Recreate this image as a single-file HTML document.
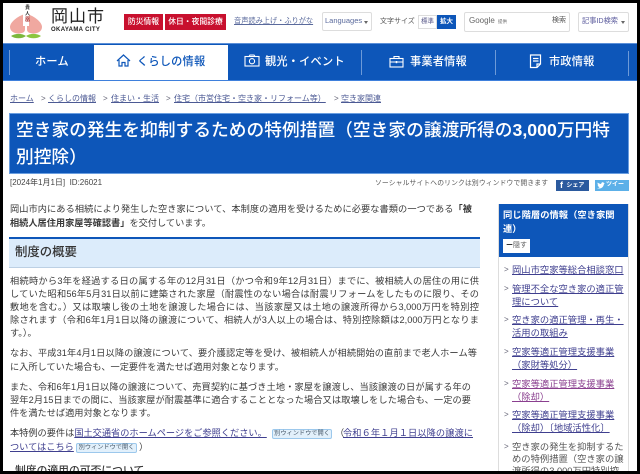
<!DOCTYPE html>
<html lang="ja"><head><meta charset="utf-8"><title>空き家の発生を抑制するための特例措置</title>
<style>
html,body{margin:0;padding:0;background:#000;}
#f{position:absolute;left:0;top:0;width:640px;height:474px;overflow:hidden;background:#000;}
#p{position:absolute;left:3px;top:3px;width:634px;height:468px;overflow:hidden;background:#fff;}
#c{position:absolute;left:-3px;top:-3px;width:640px;height:474px;font-family:"Liberation Sans","Noto Sans CJK JP",sans-serif;color:#3a3a3a;filter:blur(.35px);}
.l{position:absolute;white-space:nowrap;line-height:14px;font-size:9.2px;}
.j{text-align-last:justify;}
.b{position:absolute;box-sizing:border-box;}
.a{color:#3f3f8f;text-decoration:underline;}
.bc{font-size:8px;color:#4c5a94;text-decoration:underline;}
.ar{font-size:8px;color:#667;}
.s{font-size:9.3px;color:#3f3f8f;text-decoration:underline;}
.nav{color:#fff;font-size:11.2px;font-weight:500;letter-spacing:.2px;}
.w{position:absolute;box-sizing:border-box;font-size:6.2px;line-height:8px;height:10px;border:1px solid #9cc8ec;background:#e2f0fb;color:#456;border-radius:2px;text-align:center;}
strong{font-weight:700;}
</style></head><body><div id="f"><div id="p"><div id="c">

<!-- logo -->
<svg class="b" style="left:8px;top:3px" width="36" height="37" viewBox="0 0 36 37">
<path d="M17 11C10 13 2 19 2 24c0 4 4 6.500 8 6.500 4 0 7-1 7-4z" fill="#f0a8a0"/>
<path d="M19 11c7 2 15 8 15 13 0 4-4 6.500-8 6.500-4 0-7-1-7-4z" fill="#f0a8a0"/>
<path d="M3 33c5-3 11-2.500 15 0-4 3-11 3-15 0z" fill="#7cb83e"/>
<path d="M33 33c-5-3-11-2.500-15 0 4 3 11 3 15 0z" fill="#8cc63f"/>
<rect x="15" y="2" width="6" height="21" fill="#fff"/>
</svg>
<div class="l" style="left:25px;top:5px;font-size:5px;line-height:6px;width:6px;white-space:normal;font-weight:700;color:#333">貴人</div>
<div class="l" style="left:25px;top:17px;font-size:5px;line-height:6px;color:#a33;font-weight:700">凰</div>
<div class="l" style="left:51px;top:7px;font-size:17px;line-height:20px;letter-spacing:1px;color:#222;">岡山市</div>
<div class="l" style="left:51px;top:26px;font-size:6px;line-height:8px;font-weight:700;letter-spacing:.35px;color:#222">OKAYAMA CITY</div>

<!-- top bar -->
<div class="b" style="left:124px;top:14px;width:39px;height:16px;background:#c8102e;color:#fff;font-size:7.800px;line-height:16px;text-align:center;font-weight:500">防災情報</div>
<div class="b" style="left:165px;top:14px;width:61px;height:16px;background:#c8102e;color:#fff;font-size:7.800px;line-height:16px;text-align:center;font-weight:500">休日・夜間診療</div>
<div class="l" style="left:234px;top:14px;font-size:7.200px;color:#5a6a9c;text-decoration:underline">音声読み上げ・ふりがな</div>

<div class="b" style="left:322px;top:12px;width:50px;height:19px;border:1px solid #ddd;border-radius:2px"></div>
<div class="l" style="left:325px;top:14px;font-size:7.500px;color:#5a6a9c">Languages</div>
<div class="b" style="left:364px;top:21px;border:2.500px solid transparent;border-top:3px solid #666"></div>
<div class="l" style="left:380px;top:15px;font-size:7px;color:#555">文字サイズ</div>
<div class="b" style="left:418px;top:15px;width:19px;height:14px;border:1px solid #ddd;font-size:6.500px;line-height:12px;text-align:center;color:#5a5a8a">標準</div>
<div class="b" style="left:437px;top:15px;width:19px;height:14px;background:#0d56b9;font-size:6.500px;line-height:14px;text-align:center;color:#fff;font-weight:700">拡大</div>
<div class="b" style="left:464px;top:12px;width:106px;height:20px;border:1px solid #ddd;border-radius:2px"></div>
<div class="l" style="left:469px;top:14px;font-size:8px;color:#666">Google</div>
<div class="l" style="left:498px;top:15px;font-size:4.500px;color:#666">提供</div>
<div class="l" style="left:552px;top:14px;font-size:7px;color:#555">検索</div>
<div class="b" style="left:578px;top:12px;width:51px;height:20px;border:1px solid #ddd;border-radius:2px"></div>
<div class="l" style="left:582px;top:14px;font-size:7.200px;color:#5a5a9c">記事ID検索</div>
<div class="b" style="left:621px;top:21px;border:2.500px solid transparent;border-top:3px solid #666"></div>

<!-- nav -->
<div class="b" style="left:3px;top:43px;width:634px;height:38px;background:#0d56b9;border-top:1px solid #5b8fd8;border-bottom:1px solid #3f80dc"></div>
<div class="b" style="left:94px;top:45px;width:134px;height:35px;background:#fff"></div>
<div class="b" style="left:9px;top:50px;width:1px;height:25px;background:#6d9ad8"></div>
<div class="b" style="left:361px;top:50px;width:1px;height:25px;background:#6d9ad8"></div>
<div class="b" style="left:495px;top:50px;width:1px;height:25px;background:#6d9ad8"></div>
<div class="b" style="left:628px;top:51px;width:1px;height:25px;background:#6d9ad8"></div>
<div class="l nav" style="left:35px;top:55px">ホーム</div>
<svg class="b" style="left:116px;top:54px" width="15" height="13" viewBox="0 0 15 13" fill="none" stroke="#0d56b9" stroke-width="1.200"><path d="M1 7 7.500 1 14 7M3 6v6h3V8.500h3V12h3V6"/></svg>
<div class="l nav" style="left:137px;top:55px;color:#0d56b9">くらしの情報</div>
<svg class="b" style="left:244px;top:54px" width="16" height="13" viewBox="0 0 16 13" fill="none" stroke="#fff" stroke-width="1.100"><rect x="1" y="2.500" width="14" height="9.500"/><path d="M5 2.500 6 1h4l1 1.500"/><circle cx="8" cy="7.200" r="2.600"/></svg>
<div class="l nav" style="left:265px;top:55px">観光・イベント</div>
<svg class="b" style="left:389px;top:55px" width="15" height="13" viewBox="0 0 15 13" fill="none" stroke="#fff" stroke-width="1.100"><rect x="1" y="3.500" width="13" height="8.500"/><path d="M5 3.500V1.500h5v2M1 7h13"/><path d="M7.500 6v2.200" stroke-width="1.500"/></svg>
<div class="l nav" style="left:410px;top:55px">事業者情報</div>
<svg class="b" style="left:529px;top:54px" width="13" height="15" viewBox="0 0 13 15" fill="none" stroke="#fff" stroke-width="1.200"><path d="M1.500 1h10v9l-3.500 3.500H1.500zM11.500 10H8v3.500M4 4.500h5.500M4 7h5.500"/></svg>
<div class="l nav" style="left:549px;top:55px">市政情報</div>

<!-- breadcrumb -->
<div class="l bc" style="left:10px;top:92px">ホーム</div><div class="l ar" style="left:41px;top:92px">&gt;</div>
<div class="l bc" style="left:48px;top:92px">くらしの情報</div><div class="l ar" style="left:103px;top:92px">&gt;</div>
<div class="l bc" style="left:111px;top:92px">住まい・生活</div><div class="l ar" style="left:166px;top:92px">&gt;</div>
<div class="l bc" style="left:174px;top:92px">住宅（市営住宅・空き家・リフォーム等）</div><div class="l ar" style="left:334px;top:92px">&gt;</div>
<div class="l bc" style="left:341px;top:92px">空き家関連</div>

<!-- title -->
<div class="b" style="left:9px;top:113px;width:620px;height:61px;background:#0d56b9;border:1px solid #6a9ee0"></div>
<div class="l j" style="left:16px;top:117px;width:594px;font-size:17.700px;line-height:27px;color:#fff;font-weight:500">空き家の発生を抑制するための特例措置（空き家の譲渡所得の<b>3,000</b>万円特</div>
<div class="l" style="left:16px;top:144px;font-size:17.700px;line-height:27px;color:#fff;font-weight:500">別控除）</div>

<div class="l" style="left:10px;top:176px;font-size:8px;color:#444">[2024年1月1日]&nbsp;&nbsp;ID:26021</div>
<div class="l j" style="left:375px;top:177px;width:173px;font-size:6.800px;color:#555">ソーシャルサイトへのリンクは別ウィンドウで開きます</div>
<div class="b" style="left:556px;top:180px;width:33px;height:11px;background:#2b5a9e;color:#fff;font-size:6px;line-height:11px;padding-left:4px;font-weight:700"><span style="font-size:9px;vertical-align:-1px">f</span>&nbsp;&nbsp;シェア</div>
<div class="b" style="left:595px;top:180px;width:34px;height:11px;background:#5cb0e8;color:#fff;font-size:6px;line-height:11px;padding-left:11px;font-weight:700">ツイート</div>
<svg class="b" style="left:597px;top:182px" width="8" height="7" viewBox="0 0 8 7"><path d="M0 6c2 1 6 1 7-4l1-1-1 .2C6.500 0 5 0 4.500 1L4 2C3 2 1.500 1.300 .7.500.3 1.500.7 2.500 1.300 3L.6 2.800c0 .8.600 1.400 1.300 1.600H1.200c.2.600.8 1 1.500 1C2 5.900 1 6.100 0 6z" fill="#fff"/></svg>

<!-- intro -->
<div class="l j" style="left:10px;top:202px;width:462px">岡山市内にある相続により発生した空き家について、本制度の適用を受けるために必要な書類の一つである<strong>「被</strong></div>
<div class="l" style="left:10px;top:216px"><strong>相続人居住用家屋等確認書」</strong>を交付しています。</div>

<!-- heading -->
<div class="b" style="left:9px;top:237px;width:471px;height:31px;background:#dcecfb;border-top:2px solid #0d56b9;border-bottom:1px solid #bcd0e4"></div>
<div class="l" style="left:15px;top:245px;font-size:12.400px;font-weight:500;color:#333">制度の概要</div>

<!-- para -->
<div class="l j" style="left:10px;top:274px;width:469px">相続時から3年を経過する日の属する年の12月31日（かつ令和9年12月31日）までに、被相続人の居住の用に供</div>
<div class="l j" style="left:10px;top:287px;width:469px">していた昭和56年5月31日以前に建築された家屋（耐震性のない場合は耐震リフォームをしたものに限り、その</div>
<div class="l j" style="left:10px;top:300px;width:469px">敷地を含む。）又は取壊し後の土地を譲渡した場合には、当該家屋又は土地の譲渡所得から3,000万円を特別控</div>
<div class="l j" style="left:10px;top:313px;width:469px">除されます（令和6年1月1日以降の譲渡について、相続人が3人以上の場合は、特別控除額は2,000万円となりま</div>
<div class="l" style="left:10px;top:326px">す。）。</div>

<div class="l j" style="left:10px;top:346px;width:467px">なお、平成31年4月1日以降の譲渡について、要介護認定等を受け、被相続人が相続開始の直前まで老人ホーム等</div>
<div class="l" style="left:10px;top:360px">に入所していた場合も、一定要件を満たせば適用対象となります。</div>

<div class="l j" style="left:10px;top:380px;width:461px">また、令和6年1月1日以降の譲渡について、売買契約に基づき土地・家屋を譲渡し、当該譲渡の日が属する年の</div>
<div class="l j" style="left:10px;top:393px;width:461px">翌年2月15日までの間に、当該家屋が耐震基準に適合することとなった場合又は取壊しをした場合も、一定の要</div>
<div class="l" style="left:10px;top:406px">件を満たせば適用対象となります。</div>

<div class="l" style="left:10px;top:426px">本特例の要件は<span class="a">国土交通省のホームページをご参照ください。</span></div>
<div class="w" style="left:272px;top:429px;width:60px">別ウィンドウで開く</div>
<div class="l" style="left:335px;top:426px">（</div>
<div class="l j a" style="left:343px;top:426px;width:130px">令和６年１月１日以降の譲渡に</div>
<div class="l a" style="left:10px;top:440px">ついてはこちら</div>
<div class="w" style="left:76px;top:443px;width:61px">別ウィンドウで開く</div>
<div class="l" style="left:139px;top:440px">）</div>
<div class="l" style="left:15px;top:464px;font-size:10.800px;font-weight:500">制度の適用の可否について</div>

<!-- sidebar -->
<div class="b" style="left:498px;top:204px;width:131px;height:270px;border:1px solid #ddd;border-bottom:0"></div>
<div class="b" style="left:499px;top:204px;width:129px;height:53px;background:#0d56b9"></div>
<div class="l" style="left:503px;top:208px;font-size:9.300px;color:#fff;font-weight:700">同じ階層の情報（空き家関</div>
<div class="l" style="left:503px;top:222px;font-size:9.300px;color:#fff;font-weight:700">連）</div>
<div class="b" style="left:503px;top:239px;width:27px;height:14px;background:#fff;font-size:7px;line-height:14px;text-align:center;color:#555"><b style="color:#333">ー</b>隠す</div>

<div class="l ar" style="left:504px;top:263px">&gt;</div><div class="l s" style="left:512px;top:263px">岡山市空家等総合相談窓口</div>
<div class="l ar" style="left:504px;top:282px">&gt;</div><div class="l s" style="left:512px;top:282px">管理不全な空き家の適正管</div><div class="l s" style="left:512px;top:295px">理について</div>
<div class="l ar" style="left:504px;top:313px">&gt;</div><div class="l s" style="left:512px;top:313px">空き家の適正管理・再生・</div><div class="l s" style="left:512px;top:326px">活用の取組み</div>
<div class="l ar" style="left:504px;top:345px">&gt;</div><div class="l s" style="left:512px;top:345px">空家等適正管理支援事業</div><div class="l s" style="left:512px;top:358px">（家財等処分）</div>
<div class="l ar" style="left:504px;top:377px">&gt;</div><div class="l s" style="left:512px;top:377px;color:#8a3f8f">空家等適正管理支援事業</div><div class="l s" style="left:512px;top:390px;color:#8a3f8f">（除却）</div>
<div class="l ar" style="left:504px;top:408px">&gt;</div><div class="l s" style="left:512px;top:408px">空家等適正管理支援事業</div><div class="l s" style="left:512px;top:421px">（除却）〔地域活性化〕</div>
<div class="l ar" style="left:504px;top:440px">&gt;</div><div class="l" style="left:512px;top:440px;font-size:9.300px;color:#555">空き家の発生を抑制するた</div><div class="l" style="left:512px;top:452px;font-size:9.300px;color:#555">めの特例措置（空き家の譲</div><div class="l" style="left:512px;top:464px;font-size:9.300px;color:#555">渡所得の3,000万円特別控</div>

</div></div></div></body></html>
